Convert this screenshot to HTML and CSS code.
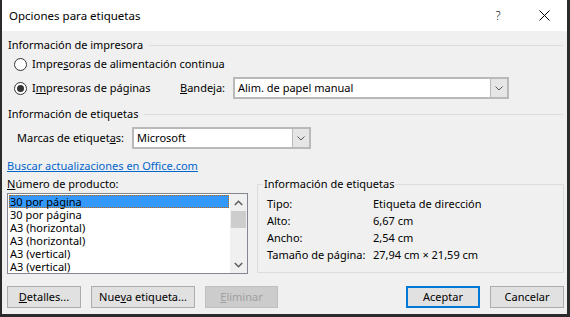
FILE: index.html
```html
<!DOCTYPE html>
<html lang="es">

<head>
    <meta charset="UTF-8">
    <title>Opciones para etiquetas</title>
    <link rel="stylesheet" href="styles.css">
</head>

<body>
    <div class="window">
        <div class="titlebar">
            <span class="title">Opciones para etiquetas</span>
            <div class="caption-btns">
                <span class="cap-btn help">?</span>
                <span class="cap-btn close">
                    <svg width="11" height="11" viewBox="0 0 11 11">
                        <path d="M0.5 0.5L10.5 10.5M10.5 0.5L0.5 10.5" stroke="#000" stroke-width="1" fill="none" />
                    </svg>
                </span>
            </div>
        </div>

        <div class="content">
            <div class="section-head"><span>Información de impresora</span><span class="rule"></span></div>

            <div class="radio-row first">
                <span class="radio"></span>
                <span>Impre<u>s</u>oras de alimentación continua</span>
            </div>

            <div class="radio-row second">
                <span class="radio checked"></span>
                <span class="radio-label">I<u>m</u>presoras de páginas</span>
                <span class="tray-label"><u>B</u>andeja:</span>
                <div class="combo tray">
                    <span class="combo-text">Alim. de papel manual</span>
                    <span class="combo-btn">
                        <svg width="8" height="5" viewBox="0 0 8 5">
                            <path d="M0.5 0.5L4 4L7.5 0.5" stroke="#555" stroke-width="1" fill="none" />
                        </svg>
                    </span>
                </div>
            </div>

            <div class="section-head second"><span>Información de etiquetas</span><span class="rule"></span></div>

            <div class="brand-row">
                <span class="brand-label">Marcas de etiquet<u>a</u>s:</span>
                <div class="combo brand">
                    <span class="combo-text">Microsoft</span>
                    <span class="combo-btn">
                        <svg width="8" height="5" viewBox="0 0 8 5">
                            <path d="M0.5 0.5L4 4L7.5 0.5" stroke="#555" stroke-width="1" fill="none" />
                        </svg>
                    </span>
                </div>
            </div>

            <div class="link-row"><span class="link">Buscar actualizaciones en Office.com</span></div>

            <div class="lower">
                <div class="product-col">
                    <div class="product-label"><u>N</u>úmero de producto:</div>
                    <div class="listbox">
                        <ul class="items">
                            <li class="selected">30 por página</li>
                            <li>30 por página</li>
                            <li>A3 (horizontal)</li>
                            <li>A3 (horizontal)</li>
                            <li>A3 (vertical)</li>
                            <li>A3 (vertical)</li>
                        </ul>
                        <div class="scrollbar">
                            <span class="arrow">
                                <svg width="9" height="6" viewBox="0 0 9 6">
                                    <path d="M0.8 5L4.5 1.3L8.2 5" stroke="#606060" stroke-width="1.6" fill="none" />
                                </svg>
                            </span>
                            <span class="thumb"></span>
                            <span class="track"></span>
                            <span class="arrow">
                                <svg width="9" height="6" viewBox="0 0 9 6">
                                    <path d="M0.8 1L4.5 4.7L8.2 1" stroke="#606060" stroke-width="1.6" fill="none" />
                                </svg>
                            </span>
                        </div>
                    </div>
                </div>

                <fieldset class="info">
                    <legend>Información de etiquetas</legend>
                    <div class="info-row"><span class="key">Tipo:</span><span>Etiqueta de dirección</span></div>
                    <div class="info-row"><span class="key">Alto:</span><span>6,67 cm</span></div>
                    <div class="info-row"><span class="key">Ancho:</span><span>2,54 cm</span></div>
                    <div class="info-row"><span class="key">Tamaño de página:</span><span>27,94 cm × 21,59 cm</span></div>
                </fieldset>
            </div>

            <div class="buttons">
                <span class="btn details"><u>D</u>etalles...</span>
                <span class="btn new">Nue<u>v</u>a etiqueta...</span>
                <span class="btn delete disabled"><u>E</u>liminar</span>
                <span class="spacer"></span>
                <span class="btn ok">Aceptar</span>
                <span class="btn cancel">Cancelar</span>
            </div>
        </div>
    </div>
</body>

</html>
```

FILE: styles.css
```css
body {
    margin: 0;
    padding: 0;
    font-family: "Segoe UI", "Noto Sans", sans-serif;
    font-size: 11px;
    line-height: 16px;
    color: #000;
    background: #2b2b2b;
    white-space: nowrap;
}

.window {
    width: 570px;
    height: 317px;
    box-sizing: border-box;
    border-left: 2px solid #2b2b2b;
    border-right: 3px solid #2b2b2b;
    border-bottom: 3px solid #2b2b2b;
    background-color: #f0f0f0;
    overflow: hidden;
}

/* title bar */
.titlebar {
    height: 31px;
    background-color: #fff;
    display: flex;
    align-items: center;
}

.title {
    padding-left: 7px;
    flex: 1;
    font-size: 11.5px;
}

.caption-btns {
    display: flex;
    height: 31px;
}

.cap-btn {
    width: 46px;
    display: flex;
    align-items: center;
    justify-content: center;
}

.help {
    font-size: 12px;
    font-weight: 300;
}

/* content */
.content {
    padding: 0 3px 0 5px;
}

.section-head {
    display: flex;
    align-items: center;
    height: 16px;
    margin-top: 6px;
    padding-left: 1px;
}

.section-head.second {
    margin-top: 7px;
}

.section-head .rule {
    flex: 1;
    border-top: 1px solid #dcdcdc;
    margin-left: 6px;
    margin-right: 1px;
}

.radio-row {
    display: flex;
    align-items: center;
}

.radio-row.first {
    height: 16px;
    margin-top: 3px;
}

.radio-row.second {
    height: 22px;
    margin-top: 5px;
}

.radio {
    width: 13px;
    height: 13px;
    box-sizing: border-box;
    border: 1px solid #333;
    border-radius: 50%;
    background-color: #fff;
    margin-left: 7px;
    margin-right: 5px;
    display: flex;
    align-items: center;
    justify-content: center;
}

.radio.checked::after {
    content: "";
    width: 7px;
    height: 7px;
    border-radius: 50%;
    background-color: #333;
}

.radio-label {
    width: 148px;
}

.tray-label {
    width: 53px;
}

/* combo boxes */
.combo {
    height: 22px;
    box-sizing: border-box;
    border: 2px solid #b9b9b9;
    background-color: #fff;
    display: flex;
    align-items: center;
}

.combo.tray {
    width: 276px;
}

.combo.brand {
    width: 179px;
}

.combo-text {
    flex: 1;
    padding-left: 3px;
}

.combo-btn {
    width: 16px;
    height: 18px;
    background-color: #e6e6e6;
    border-left: 1px solid #b9b9b9;
    display: flex;
    align-items: center;
    justify-content: center;
}

.brand-row {
    display: flex;
    align-items: center;
    height: 22px;
    margin-top: 5px;
}

.brand-label {
    margin-left: 10px;
    width: 115px;
}

.link-row {
    height: 16px;
    margin-top: 9px;
}

.link {
    color: #0066cc;
    text-decoration: underline;
}

/* product list + info */
.lower {
    display: flex;
    margin-top: 2px;
    gap: 9px;
}

.product-col {
    width: 241px;
}

.product-label {
    height: 16px;
}

.listbox {
    margin-top: 1px;
    height: 81px;
    box-sizing: border-box;
    border: 1px solid #828790;
    background-color: #fff;
    display: flex;
}

.items {
    list-style: none;
    margin: 0;
    padding: 1px 0 0 1px;
    flex: 1;
}

.items li {
    height: 13px;
    line-height: 13px;
    padding-left: 1px;
}

.items li.selected {
    background-color: #3399ff;
    outline: 1px dotted #c06000;
    outline-offset: -1px;
    margin-right: 1px;
}

.scrollbar {
    width: 17px;
    background-color: #f0f0f0;
    display: flex;
    flex-direction: column;
}

.scrollbar .arrow {
    height: 17px;
    display: flex;
    align-items: center;
    justify-content: center;
}

.scrollbar .thumb {
    height: 17px;
    margin: 0 1px;
    background-color: #cdcdcd;
}

.scrollbar .track {
    flex: 1;
}

fieldset.info {
    flex: 1;
    margin: 0;
    padding: 3px 8px 8px 0;
    border: 1px solid #dcdcdc;
    height: 97px;
    box-sizing: border-box;
}

fieldset.info legend {
    padding: 0 1px;
    margin-left: 5px;
    line-height: 16px;
}

.info-row {
    height: 17px;
    line-height: 17px;
    display: flex;
    padding-left: 9px;
}

.info-row .key {
    width: 106px;
}

/* buttons */
.buttons {
    display: flex;
    margin-top: 12px;
    gap: 10px;
}

.btn {
    height: 22px;
    box-sizing: border-box;
    border: 1px solid #adadad;
    background-color: #e1e1e1;
    display: flex;
    align-items: center;
    justify-content: center;
}

.btn.details {
    width: 74px;
}

.btn.new {
    width: 104px;
}

.btn.delete {
    width: 73px;
}

.btn.disabled {
    background-color: #cccccc;
    border-color: #bfbfbf;
    color: #a0a0a0;
}

.btn.ok {
    width: 74px;
    border: 2px solid #0078d7;
}

.btn.cancel {
    width: 74px;
}

.spacer {
    flex: 1;
}
```
